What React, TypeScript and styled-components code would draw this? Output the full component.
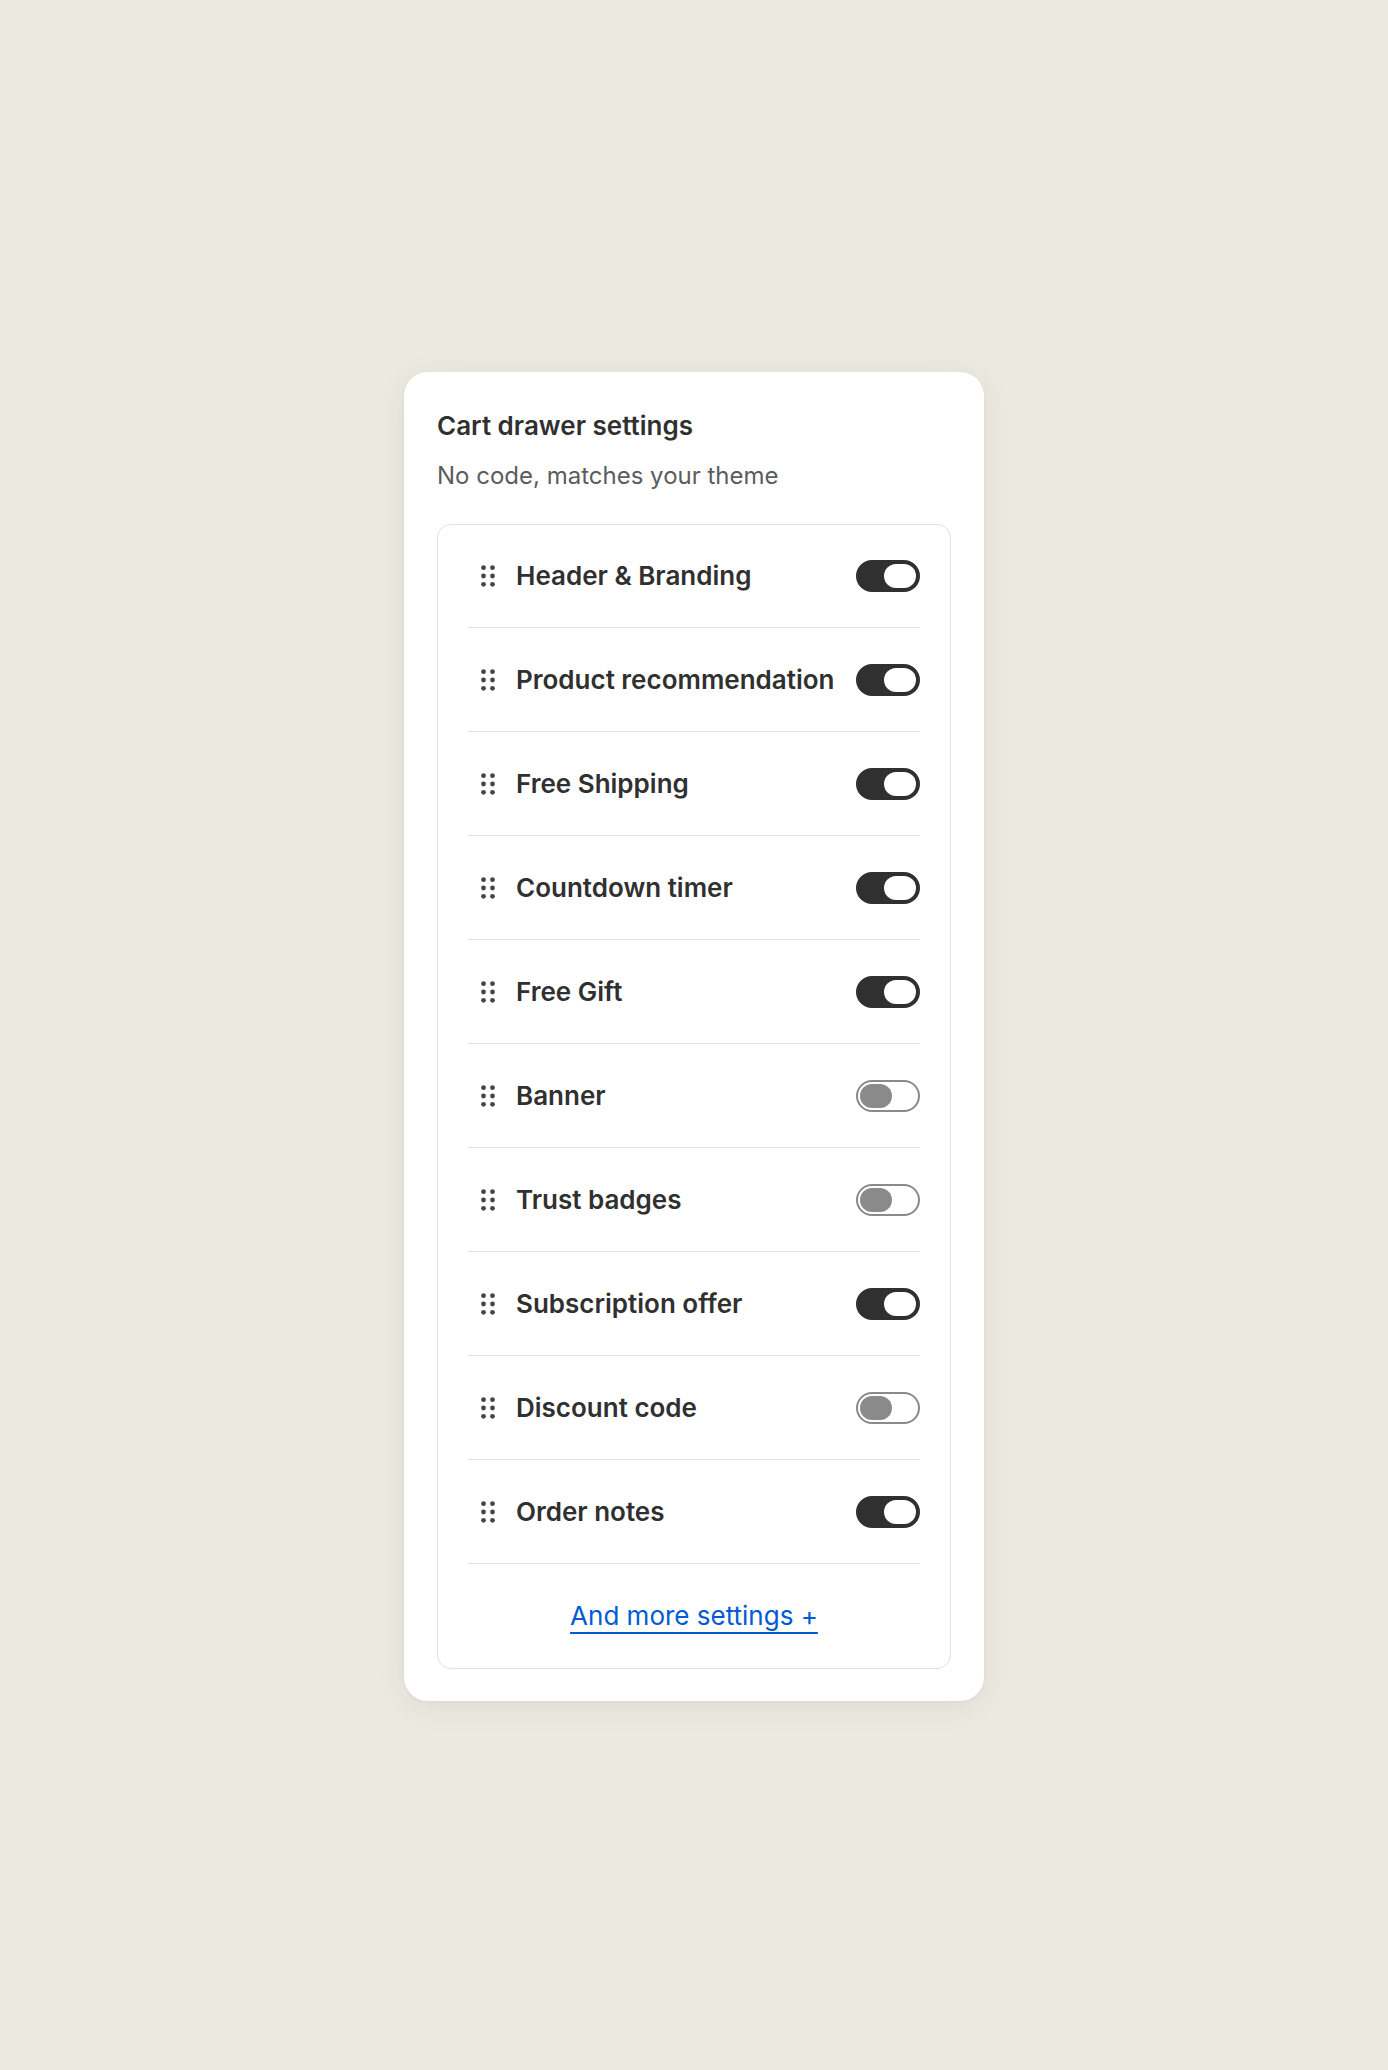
import React, { useState } from "react";
import styled, { createGlobalStyle } from "styled-components";

const GlobalStyle = createGlobalStyle`
  html, body {
    margin: 0;
    padding: 0;
    background: #ECE9E1;
  }
  body {
    font-family: Inter, "Noto Sans", "Liberation Sans", sans-serif;
    color: #303030;
    -webkit-font-smoothing: antialiased;
  }
  * { box-sizing: border-box; }
`;

const Page = styled.main`
  min-height: 100vh;
  padding-top: 3px;
  display: flex;
  align-items: center;
  justify-content: center;
`;

const Card = styled.section`
  width: 580px;
  background: #ffffff;
  border-radius: 24px;
  padding: 36px 33px 32px;
  box-shadow: 0 6px 30px rgba(60, 55, 40, 0.07), 0 1px 4px rgba(60, 55, 40, 0.04);
`;

const Title = styled.h1`
  margin: 0;
  font-size: 26px;
  line-height: 36px;
  font-weight: 600;
  color: #303030;
`;

const Subtitle = styled.p`
  margin: 16px 0 32px;
  font-size: 24px;
  line-height: 32px;
  font-weight: 400;
  color: #5c5c5c;
`;

const List = styled.div`
  border: 1px solid #E3E1DA;
  border-radius: 14px;
  padding: 0 30px;
  display: flex;
  flex-direction: column;
`;

const Row = styled.div`
  height: 104px;
  display: flex;
  align-items: center;
  border-bottom: 1px solid #E3E2DC;
  padding-left: 13px;

  &:first-child {
    height: 103px;
  }
`;

const Grip = styled.svg`
  width: 14px;
  height: 22px;
  flex: none;
  color: #454545;
`;

const Label = styled.span`
  flex: 1;
  margin-left: 21px;
  font-size: 26px;
  line-height: 34px;
  font-weight: 600;
  color: #303030;
  white-space: nowrap;
`;

const Track = styled.button<{ $on: boolean }>`
  width: 64px;
  height: 32px;
  flex: none;
  padding: 2px;
  border-radius: 16px;
  border: 2px solid ${(p) => (p.$on ? "#303030" : "#8a8a8a")};
  background: ${(p) => (p.$on ? "#303030" : "#ffffff")};
  display: flex;
  align-items: center;
  justify-content: ${(p) => (p.$on ? "flex-end" : "flex-start")};
  cursor: pointer;
`;

const Knob = styled.span<{ $on: boolean }>`
  width: 32px;
  height: 24px;
  border-radius: 12px;
  background: ${(p) => (p.$on ? "#ffffff" : "#8a8a8a")};
`;

const Footer = styled.div`
  height: 104px;
  display: flex;
  align-items: center;
  justify-content: center;
`;

const MoreLink = styled.a`
  font-size: 26px;
  line-height: 34px;
  font-weight: 400;
  color: #005bd3;
  text-decoration: underline;
  text-decoration-thickness: 2px;
  text-underline-offset: 7px;
  cursor: pointer;
`;

const GripIcon = () => (
  <Grip viewBox="0 0 14 22" aria-hidden="true">
    {[2.7, 11, 19.3].map((cy) =>
      [2.5, 11.5].map((cx) => <circle key={`${cx}-${cy}`} cx={cx} cy={cy} r={2.4} fill="currentColor" />)
    )}
  </Grip>
);

const initial = [
  { name: "Header & Branding", on: true },
  { name: "Product recommendation", on: true },
  { name: "Free Shipping", on: true },
  { name: "Countdown timer", on: true },
  { name: "Free Gift", on: true },
  { name: "Banner", on: false },
  { name: "Trust badges", on: false },
  { name: "Subscription offer", on: true },
  { name: "Discount code", on: false },
  { name: "Order notes", on: true },
];

export default function App() {
  const [items, setItems] = useState(initial);
  const toggle = (i: number) =>
    setItems((prev) => prev.map((it, j) => (j === i ? { ...it, on: !it.on } : it)));

  return (
    <>
      <GlobalStyle />
      <Page>
        <Card>
          <Title>Cart drawer settings</Title>
          <Subtitle>No code, matches your theme</Subtitle>
          <List>
            {items.map((it, i) => (
              <Row key={it.name}>
                <GripIcon />
                <Label>{it.name}</Label>
                <Track $on={it.on} onClick={() => toggle(i)} aria-pressed={it.on} aria-label={it.name}>
                  <Knob $on={it.on} />
                </Track>
              </Row>
            ))}
            <Footer>
              <MoreLink>And more settings +</MoreLink>
            </Footer>
          </List>
        </Card>
      </Page>
    </>
  );
}
